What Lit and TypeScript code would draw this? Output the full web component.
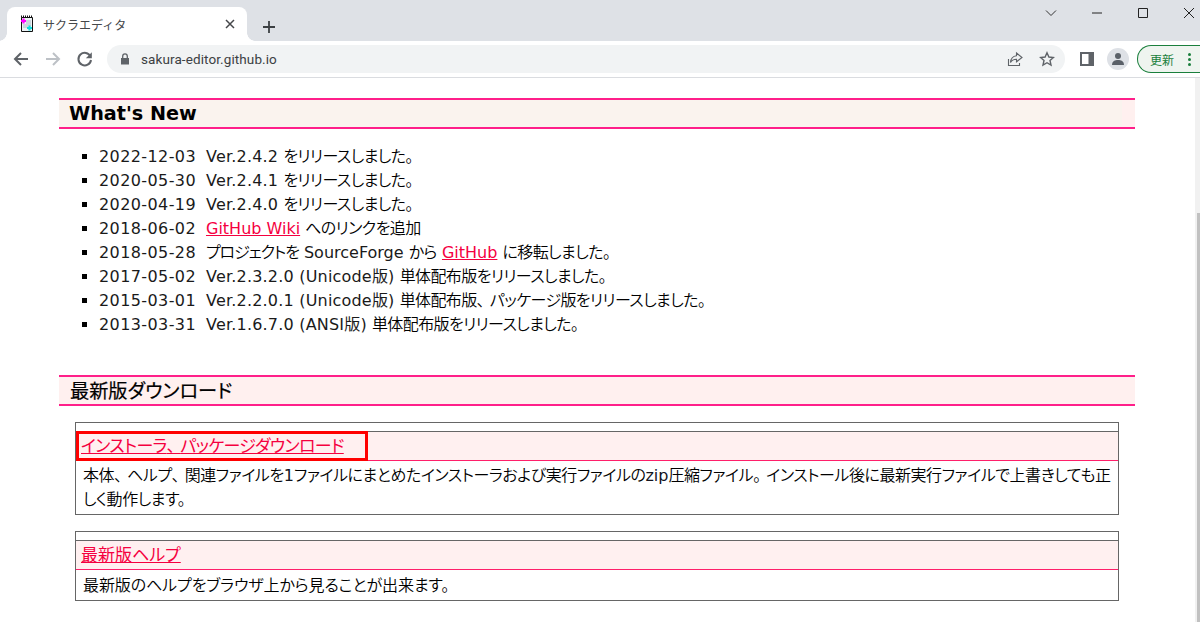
import { LitElement, html, css } from "lit";
import { customElement } from "lit/decorators.js";

const ten = html`<span class="p">、</span>`;
const maru = html`<span class="p">。</span>`;
const news = [
  ["2022-12-03", html`<span class="v">Ver.2.4.2</span> <span class="j">をリリースしました。</span>`],
  ["2020-05-30", html`<span class="v">Ver.2.4.1</span> <span class="j">をリリースしました。</span>`],
  ["2020-04-19", html`<span class="v">Ver.2.4.0</span> <span class="j">をリリースしました。</span>`],
  ["2018-06-02", html`<a>GitHub Wiki</a> <span class="j">へのリンクを追加</span>`],
  ["2018-05-28", html`<span class="k">プロジェクトを</span> SourceForge <span class="j">から</span> <a>GitHub</a> <span class="j">に移転しました。</span>`],
  ["2017-05-02", html`<span class="v">Ver.2.3.2.0 (Unicode版)</span> <span class="j">単体配布版をリリースしました。</span>`],
  ["2015-03-01", html`<span class="v">Ver.2.2.0.1 (Unicode版)</span> <span class="j">単体配布版${ten}パッケージ版をリリースしました。</span>`],
  ["2013-03-31", html`<span class="v">Ver.1.6.7.0 (ANSI版)</span> <span class="j">単体配布版をリリースしました。</span>`],
];

@customElement("app-root")
export class AppRoot extends LitElement {
  static styles = css`
    :host { display: block; width: 1200px; height: 622px; overflow: hidden; background: #fff; color: #000;
      font-family: "DejaVu Sans", "Noto Sans CJK JP", sans-serif; font-feature-settings: "palt"; }
    .tabstrip { height: 41px; background: #dee1e6; display: flex; align-items: flex-end; position: relative; }
    .tab { width: 240px; height: 34px; margin-left: 7px; background: #fff; border-radius: 8px 8px 0 0; position: relative;
      display: flex; align-items: center; box-sizing: border-box; padding: 0 9px 0 12px; }
    .tab::before, .tab::after { content: ""; position: absolute; bottom: 0; width: 8px; height: 8px; }
    .tab::before { left: -8px; background: radial-gradient(circle at 0 0, transparent 7.5px, #fff 8px); }
    .tab::after { right: -8px; background: radial-gradient(circle at 100% 0, transparent 7.5px, #fff 8px); }
    .tab .title { flex: 1; margin-left: 8px; font: 12px "Noto Sans CJK JP", sans-serif; color: #45474a; }
    .newtab { margin: 0 0 6px 14px; display: flex; }
    .winctl { position: absolute; top: 0; right: -12px; display: flex; }
    .winctl div { width: 46px; height: 26px; display: flex; align-items: center; justify-content: center; }
    .toolbar { height: 36px; background: #fff; display: flex; align-items: center; border-bottom: 1px solid #dadce0; }
    .nav { display: flex; gap: 14px; margin-left: 12px; width: 95px; }
    .nav svg { display: block; flex: none; }
    .omni { width: 958px; flex: none; height: 28px; border-radius: 14px; background: #f1f3f4; display: flex; align-items: center; box-sizing: border-box; padding: 0 10px 0 12px; }
    .url { flex: 1; margin-left: 10px; font: 13.5px Roboto, sans-serif; color: #3c4043; letter-spacing: .1px; }
    .omni svg { margin-left: 16px; }
    .sidep { margin-left: 15px; display: flex; }
    .avatar { margin-left: 13px; width: 22px; height: 22px; border-radius: 50%; background: #dee1e6; display: flex; align-items: center; justify-content: center; }
    .update { margin-left: 8px; width: 63px; flex: none; height: 28px; box-sizing: border-box; border: 1px solid #1a7f3c; border-radius: 14px 0 0 14px; border-right: 0;
      background: #eef4ef; display: flex; align-items: center; padding-left: 12px; font: 12px "Noto Sans CJK JP", sans-serif; color: #1a7f3c; gap: 14px; }
    .dots { display: flex; flex-direction: column; gap: 2px; }
    .dots i { width: 3px; height: 3px; border-radius: 50%; background: #1a7f3c; display: block; }
    .page { height: 544px; display: flex; overflow: hidden; }
    .content { flex: 1; padding: 20px 60px 0 59px; min-width: 0; }
    .bar { width: 5px; background: #f1f1f1; display: flex; flex-direction: column; align-items: flex-end; padding-top: 135px; box-sizing: border-box; }
    .bar i { display: block; width: 3px; flex: 1; background: #c1c1c1; }
    h2 { margin: 0; border-top: 2px solid #ff1f8a; border-bottom: 2px solid #ff1f8a; height: 27px;
      font-size: 19.2px; line-height: 27px; padding-left: 10px; background: #fff0ef; font-weight: 700; }
    h2.first { background: linear-gradient(to right, #faf3ee 98.8%, #fff0ef 98.8%); }
    h2.second { padding-left: 11px; font-weight: 400; font-size: 19.2px; font-family: "Noto Sans CJK JP", sans-serif; -webkit-text-stroke: .2px #000; }
    ul { margin: 16px 0 38px; padding: 0 0 0 40px; list-style: square; font-size: 16px; line-height: 24px; color: #1a1a1a; }
    li::marker { color: #000; }
    .date { margin-right: 10px; letter-spacing: .4px; }
    .v { letter-spacing: .2px; }
    .j { letter-spacing: -.6px; font-weight: 350; color: #000; }
    .k { letter-spacing: -1.1px; font-weight: 350; color: #000; }
    .p { letter-spacing: 5px; }
    a { color: #f5003f; text-decoration: underline; }
    .box { margin: 16px 16px 0; border: 1px solid #666; font-family: "Noto Sans CJK JP", sans-serif; font-weight: 350; }
    .box .blank { height: 8px; border-bottom: 1px solid #666; }
    .box .head { height: 28px; line-height: 26px; background: #fff0f0; border-bottom: 1px solid #ff1f6a; padding-left: 5px; font-size: 17px; font-weight: 400; position: relative; }
    .tight { letter-spacing: -.65px; }
    .box .body { padding: 1px 7px 4px; font-size: 16px; line-height: 24px; color: #000; letter-spacing: -.45px; }
    .box + .box { margin-top: 16px; }
    .box + .box .body { padding-top: 2px; letter-spacing: -.1px; }
    .mark { position: absolute; left: 0; top: -1px; width: 292px; height: 30px; box-sizing: border-box; border: 3px solid #f00; }
    .num { font-family: "DejaVu Sans", sans-serif; font-weight: 400; line-height: 1; letter-spacing: 0; color: #14141e; }
  `;

  render() {
    return html`
      <div class="tabstrip">
        <div class="tab">
          <svg width="16" height="18" viewBox="0 0 16 18">
            <path d="M2.500 2.500h11v14h-11z" fill="#eef3f6" stroke="#111"/>
            <path d="M2 1.500h12" stroke="#111" stroke-dasharray="1 1" stroke-width="2"/>
            <path d="M7 6h5M7 8h5M4 10h8M4 12h5" stroke="#a8b8c4"/>
            <path d="M4.500 3.500v5M2 6h5" stroke="#f0f" stroke-width="2.200"/>
            <path d="M10.500 10.500v5M8 13h5" stroke="#1dd" stroke-width="2.200"/>
          </svg>
          <span class="title">サクラエディタ</span>
          <svg width="16" height="16" viewBox="0 0 16 16"><path d="M4 4l8 8M12 4l-8 8" stroke="#45474a" stroke-width="1.500"/></svg>
        </div>
        <div class="newtab"><svg width="16" height="16" viewBox="0 0 16 16"><path d="M8 2v12M2 8h12" stroke="#3c4043" stroke-width="1.800"/></svg></div>
        <div class="winctl">
          <div><svg width="12" height="12" viewBox="0 0 12 12"><path d="M1 3.500l5 5 5-5" fill="none" stroke="#333"/></svg></div>
          <div><svg width="12" height="12" viewBox="0 0 12 12"><path d="M1 6h10" stroke="#222"/></svg></div>
          <div><svg width="12" height="12" viewBox="0 0 12 12"><path d="M1.500 1.500h9v9h-9z" fill="none" stroke="#222"/></svg></div>
          <div><svg width="12" height="12" viewBox="0 0 12 12"><path d="M1 1l10 10M11 1L1 11" stroke="#222"/></svg></div>
        </div>
      </div>
      <div class="toolbar">
        <div class="nav">
          <svg width="18" height="18" viewBox="0 0 18 18"><path d="M16 9H3M9 3L3 9l6 6" fill="none" stroke="#5f6368" stroke-width="2"/></svg>
          <svg width="18" height="18" viewBox="0 0 18 18"><path d="M2 9h13M9 3l6 6-6 6" fill="none" stroke="#bdc1c6" stroke-width="2"/></svg>
          <svg width="18" height="18" viewBox="0 0 18 18"><path d="M14.500 6.500A6.300 6.300 0 1 0 15 10" fill="none" stroke="#5f6368" stroke-width="2"/><path d="M15.800 2.200v6h-6z" fill="#5f6368"/></svg>
        </div>
        <div class="omni">
          <svg style="margin:0" width="12" height="14" viewBox="0 0 12 14"><path d="M2 6h8v6.500H2z" fill="#5f6368"/><path d="M3.700 6V4.200a2.300 2.300 0 0 1 4.600 0V6" fill="none" stroke="#5f6368" stroke-width="1.300"/></svg>
          <span class="url">sakura-editor.github.io</span>
          <svg width="16" height="16" viewBox="0 0 16 16"><path d="M1.500 8v6.500h11V12" fill="none" stroke="#5f6368" stroke-width="1.100"/><path d="M9.500 2l5.500 4.500-5.500 4.300V8.200C6.500 8.200 4.500 9.500 3.500 11.500 3.800 8 6 5.200 9.500 4.800z" fill="none" stroke="#5f6368" stroke-width="1.100"/></svg>
          <svg width="16" height="16" viewBox="0 0 16 16"><path d="M8 1.800l1.900 4.200 4.500.5-3.400 3 1 4.500L8 11.700 4 14l1-4.500-3.400-3 4.500-.5z" fill="none" stroke="#5f6368" stroke-width="1.400"/></svg>
        </div>
        <div class="sidep"><svg width="14" height="14" viewBox="0 0 14 14"><path d="M0 0h14v14H0z" fill="#5f6368"/><path d="M2 2h6.500v10H2z" fill="#fff"/></svg></div>
        <div class="avatar"><svg width="14" height="14" viewBox="0 0 14 14"><circle cx="7" cy="4" r="3" fill="#5a6068"/><path d="M1 13c0-4 3-5 6-5s6 1 6 5z" fill="#5a6068"/></svg></div>
        <div class="update"><span>更新</span><span class="dots"><i></i><i></i><i></i></span></div>
      </div>
      <div class="page">
        <div class="content">
          <h2 class="first">What's New</h2>
          <ul>
            ${news.map(([d, t]) => html`<li><span class="date">${d}</span>${t}</li>`)}
          </ul>
          <h2 class="second">最新版ダウンロード</h2>
          <div class="box">
            <div class="blank"></div>
            <div class="head"><a class="tight">インストーラ${ten}パッケージダウンロード</a><span class="mark"></span></div>
            <div class="body">本体${ten}ヘルプ${ten}関連ファイルを<span class="num">1</span>ファイルにまとめたインストーラおよび実行ファイルの<span class="num">zip</span>圧縮ファイル${maru}インストール後に最新実行ファイルで上書きしても正しく動作します。</div>
          </div>
          <div class="box">
            <div class="blank"></div>
            <div class="head"><a>最新版ヘルプ</a></div>
            <div class="body">最新版のヘルプをブラウザ上から見ることが出来ます。</div>
          </div>
        </div>
        <div class="bar"><i></i></div>
      </div>
    `;
  }
}
